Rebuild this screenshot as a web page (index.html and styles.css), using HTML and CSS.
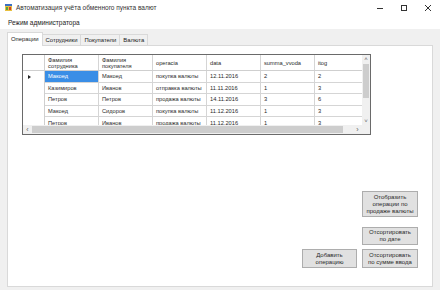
FILE: index.html
```html
<!DOCTYPE html>
<html lang="ru">
<head>
<meta charset="utf-8">
<title>Автоматизация учёта обменного пункта валют</title>
<link rel="stylesheet" href="styles.css">
</head>
<body>
<div class="window">
  <div class="titlebar">
    <svg class="appicon" width="7" height="7" viewBox="0 0 7 7">
      <rect x="0" y="0" width="7" height="7" fill="#e8c040"/>
      <rect x="0" y="0" width="7" height="2" fill="#3a6fc4"/>
      <rect x="1" y="3" width="2" height="3" fill="#5aa040"/>
      <rect x="4" y="3" width="2" height="3" fill="#d04030"/>
    </svg>
    <span class="title">Автоматизация учёта обменного пункта валют</span>
    <div class="controls">
      <div class="ctl"><svg width="8" height="8" viewBox="0 0 8 8"><line x1="1" y1="4.5" x2="7" y2="4.5" stroke="#333" stroke-width="1"/></svg></div>
      <div class="ctl"><svg width="8" height="8" viewBox="0 0 8 8"><rect x="1.5" y="1.5" width="5" height="5" fill="none" stroke="#333" stroke-width="1"/></svg></div>
      <div class="ctl"><svg width="8" height="8" viewBox="0 0 8 8"><path d="M1 1L7 7M7 1L1 7" stroke="#333" stroke-width="1"/></svg></div>
    </div>
  </div>
  <div class="menubar"><span class="menuitem">Режим администратора</span></div>
  <div class="client">
    <div class="tabstrip">
      <div class="tab active">Операции</div>
      <div class="tab">Сотрудники</div>
      <div class="tab">Покупатели</div>
      <div class="tab">Валюта</div>
    </div>
    <div class="tabpage">
      <div class="dgv">
        <div class="dgv-main">
          <div class="dgv-cells">
            <div class="row header">
              <div class="rh"></div>
              <div class="c w54 two">Фамилия<br>сотрудника</div>
              <div class="c w54 two">Фамилия<br>покупателя</div>
              <div class="c w54">operacia</div>
              <div class="c w54">data</div>
              <div class="c w54">summa_vvoda</div>
              <div class="c w47">itog</div>
            </div>
            <div class="body">
              <div class="row">
                <div class="rh"><span class="arrow"></span></div>
                <div class="c w54 sel">Макоед</div>
                <div class="c w54">Макоед</div>
                <div class="c w54">покупка валюты</div>
                <div class="c w54">12.11.2016</div>
                <div class="c w54">2</div>
                <div class="c w47">2</div>
              </div>
              <div class="row">
                <div class="rh"></div>
                <div class="c w54">Казимиров</div>
                <div class="c w54">Иванов</div>
                <div class="c w54">отправка валюты</div>
                <div class="c w54">11.11.2016</div>
                <div class="c w54">1</div>
                <div class="c w47">3</div>
              </div>
              <div class="row">
                <div class="rh"></div>
                <div class="c w54">Петров</div>
                <div class="c w54">Петров</div>
                <div class="c w54">продажа валюты</div>
                <div class="c w54">14.11.2016</div>
                <div class="c w54">3</div>
                <div class="c w47">6</div>
              </div>
              <div class="row">
                <div class="rh"></div>
                <div class="c w54">Макоед</div>
                <div class="c w54">Сидоров</div>
                <div class="c w54">покупка валюты</div>
                <div class="c w54">11.12.2016</div>
                <div class="c w54">1</div>
                <div class="c w47">3</div>
              </div>
              <div class="row">
                <div class="rh"></div>
                <div class="c w54">Петров</div>
                <div class="c w54">Иванов</div>
                <div class="c w54">продажа валюты</div>
                <div class="c w54">11.12.2016</div>
                <div class="c w54">1</div>
                <div class="c w47">3</div>
              </div>
            </div>
          </div>
          <div class="vscroll">
            <span class="sarrow">&#708;</span>
            <div class="vthumb"></div>
            <span class="sarrow down">&#709;</span>
          </div>
        </div>
        <div class="hscroll">
          <div class="hbar">
            <span class="harrow">&#8249;</span>
            <div class="hthumb"></div>
            <span class="harrow">&#8250;</span>
          </div>
          <div class="corner"></div>
        </div>
      </div>
      <div class="actions">
        <div class="btn b1">Отобразить<br>операции по<br>продаже валюты</div>
        <div class="btn b2">Отсортировать<br>по дате</div>
        <div class="btn b3">Добавить<br>операцию</div>
        <div class="btn b4">Отсортировать<br>по сумме ввода</div>
      </div>
    </div>
  </div>
</div>
</body>
</html>
```

FILE: styles.css
```css
* { box-sizing: border-box; }
html, body { margin: 0; padding: 0; }
body {
  font-family: "Liberation Sans", Arial, sans-serif;
  color: #2a2a2a;
}
.window {
  width: 440px;
  height: 290px;
  background: #f0f0f0;
  display: flex;
  flex-direction: column;
  overflow: hidden;
}
.titlebar {
  height: 15px;
  background: #fff;
  display: flex;
  align-items: center;
  padding-left: 5px;
}
.appicon { margin-right: 4px; flex: none; }
.title { font-size: 6.5px; line-height: 15px; color: #333; }
.controls { margin-left: auto; display: flex; height: 15px; }
.ctl { width: 24px; height: 15px; display: flex; align-items: center; justify-content: center; }
.menubar {
  height: 14px;
  background: #fff;
  display: flex;
  align-items: center;
}
.menuitem { font-size: 6.5px; padding-left: 8px; color: #222; }
.client {
  flex: 1;
  display: flex;
  flex-direction: column;
  padding: 3px 7px 3px 7px;
}
.tabstrip {
  height: 13px;
  display: flex;
  align-items: flex-end;
  position: relative;
  z-index: 1;
}
.tab {
  font-size: 5.9px;
  height: 11px;
  line-height: 10px;
  padding: 0 3px;
  border: 1px solid #d9d9d9;
  border-bottom: none;
  border-left: none;
  background: #f0f0f0;
  color: #222;
}
.tab.active {
  height: 14px;
  line-height: 12px;
  margin-bottom: -1px;
  background: #fff;
  border-left: 1px solid #d9d9d9;
  padding: 0 3px;
}
.tabpage {
  flex: 1;
  background: #fff;
  border: 1px solid #d9d9d9;
  padding: 8px 14px 0 14px;
}
.dgv {
  width: 349px;
  border: 1px solid #6a6a6a;
  background: #fff;
}
.dgv-main { display: flex; }
.dgv-cells { width: 339px; }
.row { display: flex; height: 11.6px; }
.row.header { height: 16px; border-bottom: 1px solid #cfcfcf; }
.body { height: 54px; overflow: hidden; }
.rh { width: 22px; flex: none; border-right: 1px solid #cfcfcf; position: relative; }
.arrow {
  position: absolute;
  left: 5px;
  top: 3.5px;
  width: 0; height: 0;
  border-left: 3px solid #222;
  border-top: 2.5px solid transparent;
  border-bottom: 2.5px solid transparent;
}
.c {
  flex: none;
  font-size: 5.7px;
  line-height: 6px;
  padding-left: 3px;
  border-right: 1px solid #d5d5d5;
  border-bottom: 1px solid #d5d5d5;
  display: flex;
  align-items: center;
  white-space: nowrap;
  overflow: hidden;
  color: #2a2a2a;
}
.header .c { border-bottom: none; }
.w54 { width: 54px; }
.w47 { width: 47px; border-right: none; }
.c.sel { background: #3a8ee6; color: #fff; }
.vscroll {
  width: 8px;
  height: 70px;
  background: #f0f0f0;
  display: flex;
  flex-direction: column;
  align-items: center;
}
.sarrow { font-size: 6px; line-height: 8px; height: 8px; color: #606060; }
.vthumb { width: 6px; height: 34px; background: #cdcdcd; margin-top: 1px; }
.sarrow.down { margin-top: auto; }
.hscroll { display: flex; height: 9px; }
.hbar {
  width: 339px;
  background: #f0f0f0;
  display: flex;
  align-items: center;
}
.harrow { font-size: 7px; line-height: 9px; color: #606060; width: 9px; text-align: center; }
.hthumb { width: 311px; height: 7px; background: #cdcdcd; }
.hthumb + .harrow { margin-left: auto; }
.corner { flex: 1; background: #f0f0f0; }
.actions {
  display: grid;
  grid-template-columns: 55px 56px;
  column-gap: 5px;
  justify-content: end;
  margin-top: 56px;
}
.btn {
  background: #e1e1e1;
  border: 1px solid #adadad;
  font-size: 6px;
  line-height: 7px;
  text-align: center;
  display: flex;
  align-items: center;
  justify-content: center;
  color: #2a2a2a;
}
.b1 { grid-column: 2; grid-row: 1; height: 26px; }
.b2 { grid-column: 2; grid-row: 2; height: 18px; margin-top: 10px; }
.b3 { grid-column: 1; grid-row: 3; height: 19px; margin-top: 4px; }
.b4 { grid-column: 2; grid-row: 3; height: 19px; margin-top: 4px; }
```
